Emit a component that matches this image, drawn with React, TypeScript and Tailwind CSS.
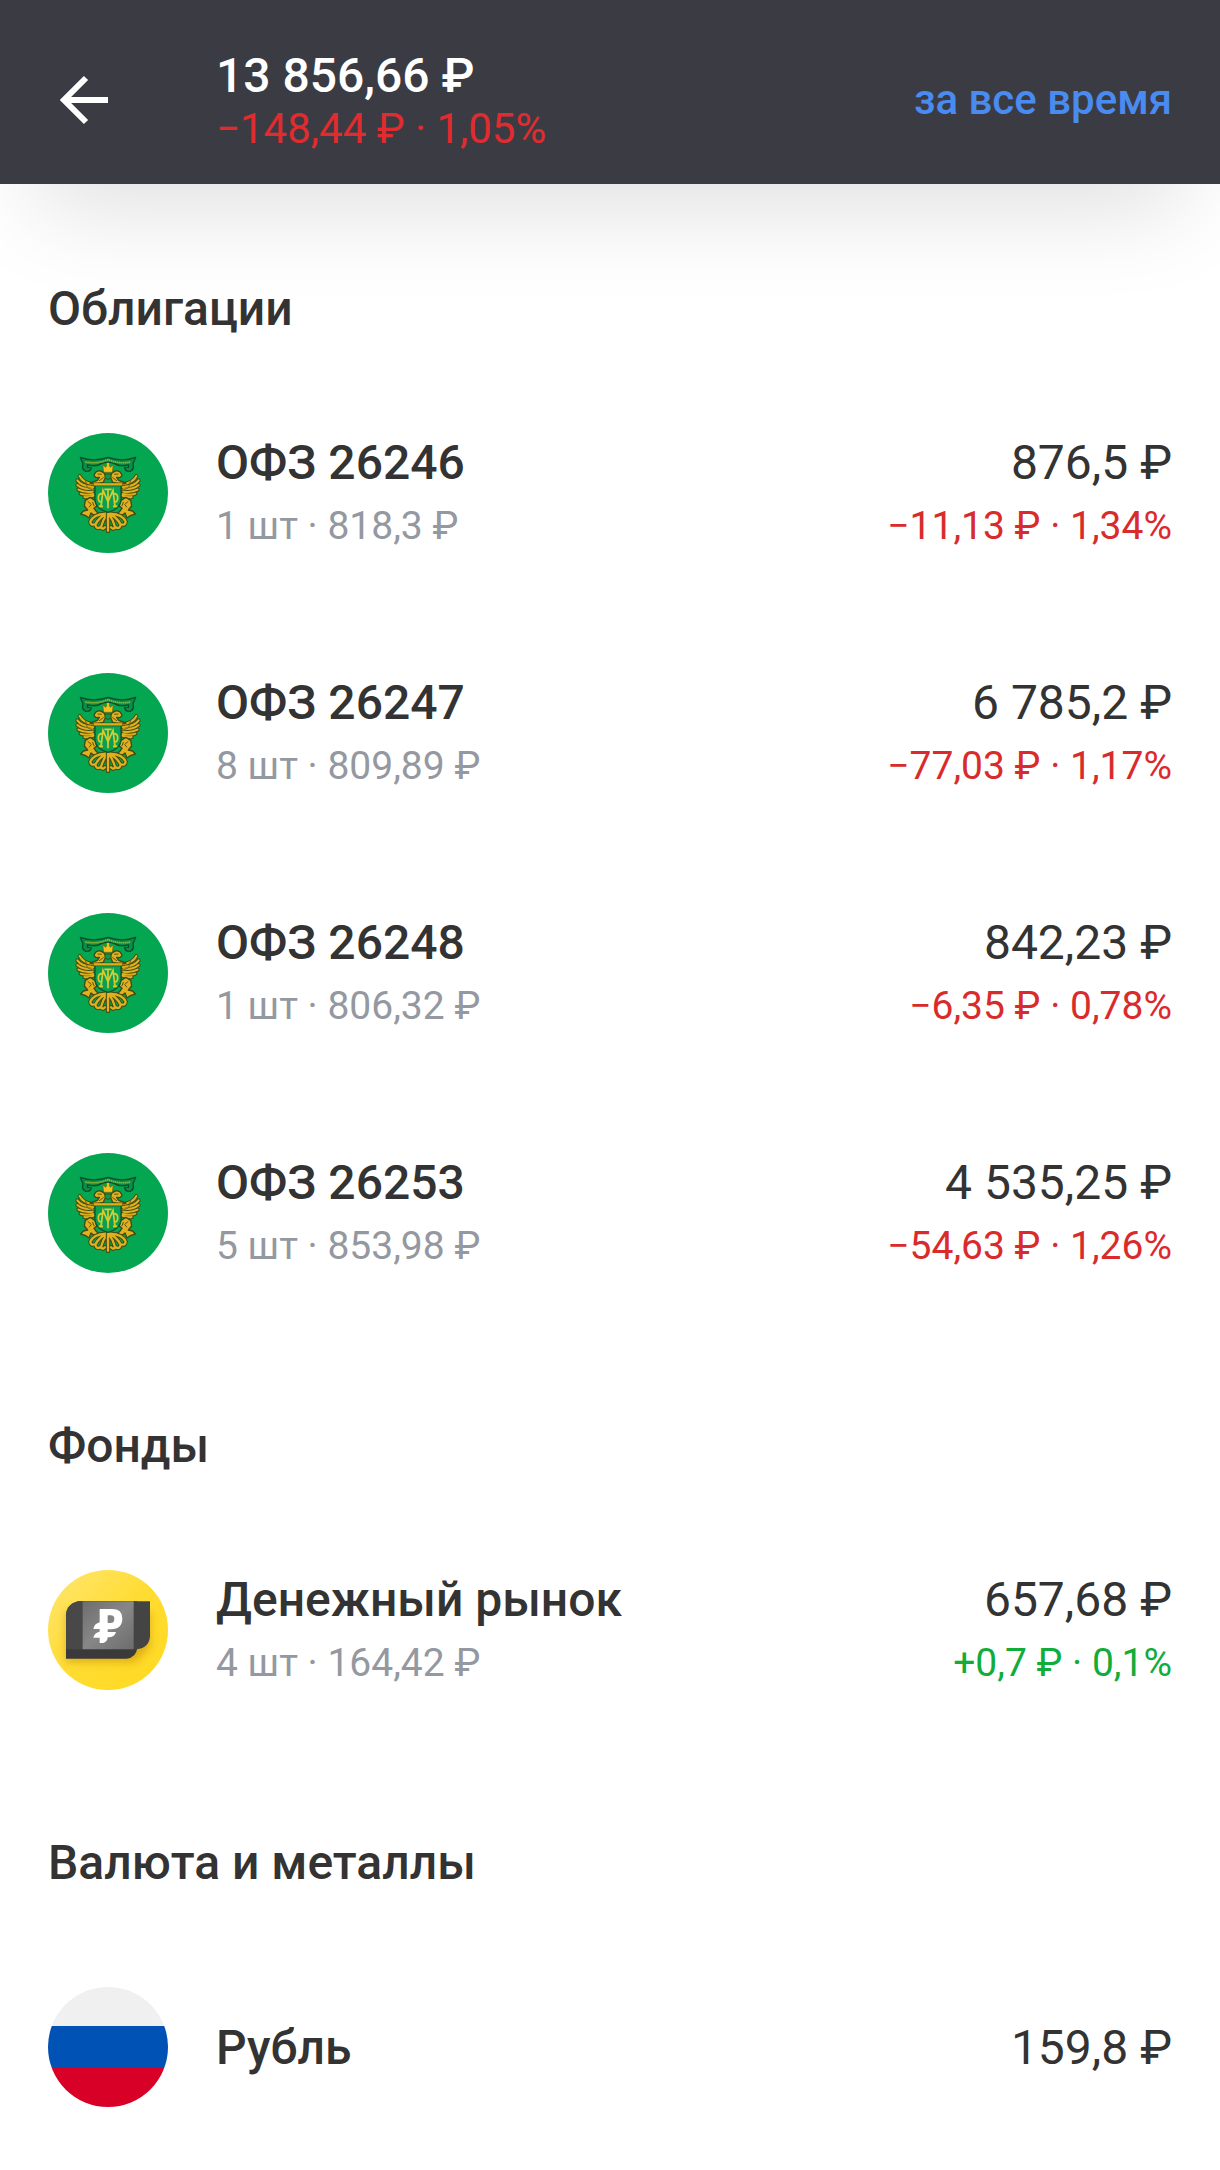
import type { ReactNode } from 'react';

type Holding = {
  id: string;
  name: string;
  icon: ReactNode;
  total: string;
  details?: string;
  change?: string;
  positive?: boolean;
};

type Section = {
  title: string;
  items: Holding[];
};

const wingFeathers =
  'M119 153 Q128 174 162 178 M112 166 Q124 184 160 186 M112 180 Q126 193 158 193 M115 194 Q130 203 158 200 M122 206 Q136 212 160 207 M133 216 Q146 218 162 212';

const tailFeathers =
  'M198 266 Q160 268 151 290 Q152 302 164 298 M200 266 Q176 278 166 299 Q168 313 181 307 M202 266 Q188 286 183 306 Q187 316 195 307 M204 266 V317';

function BondIcon() {
  return (
    <svg viewBox="24 24 360 360" className="h-30 w-30 shrink-0" aria-hidden="true">
      <circle cx="204" cy="204" r="180" fill="#05a652" />
      {/* Wings, heads, paws and tail, mirrored around the shield */}
      {['', 'translate(408 0) scale(-1 1)'].map((transform) => (
        <g key={transform} transform={transform} strokeLinecap="round" strokeLinejoin="round">
          <path d={wingFeathers} fill="none" stroke="#3f4a14" strokeWidth="12" />
          <path d={wingFeathers} fill="none" stroke="#e0b01e" strokeWidth="6" />
          <path d="M136 165 L142 188 L160 196" fill="none" stroke="#6f6414" strokeWidth="3" />
          <path
            d="M162 152 Q166 136 182 138 Q196 143 197 156 L190 172 L166 178 L150 174 L172 166 L178 157 L168 158 Z"
            fill="#e0b01e"
            stroke="#3f4a14"
            strokeWidth="4"
          />
          <path d="M174 147 L184 148 M178 167 L190 158" fill="none" stroke="#5b5614" strokeWidth="3" />
          <path
            d="M136 226 L150 217 L165 226 L171 242 L162 250 L168 258 L176 266 L162 271 L153 264 L147 279 L137 272 L122 267 L130 258 L143 255 L133 243 Z"
            fill="#e0b01e"
            stroke="#3f4a14"
            strokeWidth="4"
          />
          <path d="M144 230 L154 238 L148 246 M158 232 L162 242" fill="none" stroke="#5b5614" strokeWidth="3" />
          <path d={tailFeathers} fill="none" stroke="#3f4a14" strokeWidth="13" />
          <path d={tailFeathers} fill="none" stroke="#e0b01e" strokeWidth="7" />
        </g>
      ))}
      {/* Ribbon */}
      <path
        d="M121 97 Q160 112 204 97 Q248 112 287 97 L279 116 Q284 132 271 139 Q256 141 254 128 L265 127 L266 120 Q240 126 224 116 Q204 108 184 116 Q168 126 142 120 L143 127 L154 128 Q152 141 137 139 Q124 132 129 116 Z"
        fill="#0a8f48"
        stroke="#0a4f2a"
        strokeWidth="4"
        strokeLinejoin="round"
      />
      <path d="M136 111 Q172 118 204 104 Q236 118 272 111" fill="none" stroke="#9dbb35" strokeWidth="5" strokeDasharray="4 2" />
      {/* Crown */}
      <path d="M188 119 L197 127 L204 114 L211 127 L220 119 L217 142 L191 142 Z" fill="#f5c01c" stroke="#6d5a12" strokeWidth="2" />
      <circle cx="204" cy="117" r="4" fill="#f5c01c" />
      <path d="M195 147 H213 V157 Q204 169 195 157 Z" fill="#079c4c" stroke="#3f4a14" strokeWidth="3" />
      {/* Shield with the monogram */}
      <path d="M165 178 H243 V226 Q240 252 204 262 Q168 252 165 226 Z" fill="#0aa050" stroke="#0a5a2c" strokeWidth="4" />
      <path d="M160 178 H248" stroke="#3f4a14" strokeWidth="11" />
      <path d="M161 178 H247" stroke="#e0b01e" strokeWidth="7" />
      <g fill="none" stroke="#dccb30" strokeWidth="5">
        <path d="M183 245 L189 196 L204 230 L219 196 L225 245 M176 244 H189 M219 244 H232" />
        <path d="M204 191 V250 M193 193 H215" />
        <path d="M186 206 Q175 206 175 218 Q175 231 185 231 M222 206 Q233 206 233 218 Q233 231 223 231" />
      </g>
    </svg>
  );
}

function MoneyMarketIcon() {
  return (
    <svg viewBox="24 24 360 360" className="h-30 w-30 shrink-0" aria-hidden="true">
      <defs>
        <linearGradient id="fund-bg" x1="0" y1="0" x2="1" y2="1">
          <stop offset="0" stopColor="#ffe673" />
          <stop offset="0.5" stopColor="#ffdc32" />
          <stop offset="1" stopColor="#ffd91f" />
        </linearGradient>
        <linearGradient id="fund-note" x1="0" y1="0" x2="1" y2="1">
          <stop offset="0" stopColor="#6e6e6e" />
          <stop offset="0.5" stopColor="#878787" />
          <stop offset="1" stopColor="#6c6c6c" />
        </linearGradient>
        <filter id="fund-shadow" x="-30%" y="-30%" width="160%" height="170%">
          <feGaussianBlur stdDeviation="13" />
        </filter>
        <clipPath id="fund-clip">
          <circle cx="204" cy="204" r="180" />
        </clipPath>
      </defs>
      <circle cx="204" cy="204" r="180" fill="url(#fund-bg)" />
      <g clipPath="url(#fund-clip)">
        <path d="M78 150 H330 V255 L285 300 H78 Z" fill="#b98200" opacity="0.5" filter="url(#fund-shadow)" />
      </g>
      <path d="M78 160 Q80 122 122 118 H292 V258 Q288 287 260 290 H78 Z" fill="#3a3a3a" />
      <path d="M110 118 H330 V222 Q328 258 290 262 H110 Z" fill="#444444" />
      <path d="M78 160 Q80 122 122 118 H130 V262 H78 Z" fill="#484848" />
      <path d="M128 118 H281 V262 H128 Z" fill="url(#fund-note)" />
      <path
        d="M179 141 H216 Q247 141 247 169 Q247 202 213 202 H203 V210 H228 Q224 225 209 226 H203 Q203 239 190 243 H179 V227 H160 Q163 212 179 209 V201 H160 Q163 185 179 181 Z M203 160 V183 H212 Q223 183 223 171 Q223 160 212 160 Z"
        fill="#fff"
        fillRule="evenodd"
      />
    </svg>
  );
}

function RubleIcon() {
  return (
    <svg viewBox="0 0 120 120" className="h-30 w-30 shrink-0" aria-hidden="true">
      <clipPath id="flag-clip">
        <circle cx="60" cy="60" r="60" />
      </clipPath>
      <g clipPath="url(#flag-clip)">
        <path d="M0 0 H120 V39 H0 Z" fill="#f0f0f0" />
        <path d="M0 39 H120 V81 H0 Z" fill="#0052b4" />
        <path d="M0 81 H120 V120 H0 Z" fill="#d80027" />
      </g>
    </svg>
  );
}

const sections: Section[] = [
  {
    title: 'Облигации',
    items: [
      { id: '26246', name: 'ОФЗ 26246', icon: <BondIcon />, details: '1 шт · 818,3 ₽', total: '876,5 ₽', change: '−11,13 ₽ · 1,34%' },
      { id: '26247', name: 'ОФЗ 26247', icon: <BondIcon />, details: '8 шт · 809,89 ₽', total: '6 785,2 ₽', change: '−77,03 ₽ · 1,17%' },
      { id: '26248', name: 'ОФЗ 26248', icon: <BondIcon />, details: '1 шт · 806,32 ₽', total: '842,23 ₽', change: '−6,35 ₽ · 0,78%' },
      { id: '26253', name: 'ОФЗ 26253', icon: <BondIcon />, details: '5 шт · 853,98 ₽', total: '4 535,25 ₽', change: '−54,63 ₽ · 1,26%' },
    ],
  },
  {
    title: 'Фонды',
    items: [
      {
        id: 'money-market',
        name: 'Денежный рынок',
        icon: <MoneyMarketIcon />,
        details: '4 шт · 164,42 ₽',
        total: '657,68 ₽',
        change: '+0,7 ₽ · 0,1%',
        positive: true,
      },
    ],
  },
  {
    title: 'Валюта и металлы',
    items: [{ id: 'rub', name: 'Рубль', icon: <RubleIcon />, total: '159,8 ₽' }],
  },
];

function HoldingRow({ item }: { item: Holding }) {
  return (
    <li className="flex h-60 items-center gap-12">
      {item.icon}
      <div className="min-w-0 flex-1 pt-0.5">
        <h3 className="text-[48px] leading-[64px] font-medium">{item.name}</h3>
        {item.details && <p className="text-[39px] leading-[62px] text-[#9498a1]">{item.details}</p>}
      </div>
      <div className="pt-0.5 text-right whitespace-nowrap">
        <p className="text-[48px] leading-[64px]">{item.total}</p>
        {item.change && (
          <p className={`text-[39px] leading-[62px] ${item.positive ? 'text-[#12ac3b]' : 'text-[#d92b2b]'}`}>
            {item.change}
          </p>
        )}
      </div>
    </li>
  );
}

export default function App() {
  return (
    <div className="min-h-screen bg-white font-['Roboto',sans-serif] text-[#333333]">
      {/* Header */}
      <header className="flex h-46 items-center bg-[#3b3b44] px-12 pt-4 shadow-[0_60px_96px_-36px_rgba(0,0,0,0.13)]">
        <button type="button" aria-label="Назад" className="mr-24 flex h-18 w-18 items-center justify-center">
          <svg viewBox="0 0 72 72" className="h-18 w-18" fill="none" stroke="#fff" strokeWidth="6">
            <path d="M60 36 H16 M38 14 L16 36 L38 58" />
          </svg>
        </button>
        <div className="flex-1 pt-0.5">
          <h1 className="text-[48px] leading-[56px] font-medium text-white">13 856,66 ₽</h1>
          <p className="text-[42px] leading-[50px] text-[#e02c2e]">−148,44 ₽ · 1,05%</p>
        </div>
        <button type="button" className="text-[42px] leading-[48px] font-medium text-[#4a8bf0]">
          за все время
        </button>
      </header>

      <main className="px-12 pt-3">
        {sections.map((section) => (
          <section key={section.title}>
            <h2 className="pt-[81px] pb-8 text-[48px] leading-[64px] font-medium">{section.title}</h2>
            <ul>
              {section.items.map((item) => (
                <HoldingRow key={item.id} item={item} />
              ))}
            </ul>
          </section>
        ))}
      </main>
    </div>
  );
}
